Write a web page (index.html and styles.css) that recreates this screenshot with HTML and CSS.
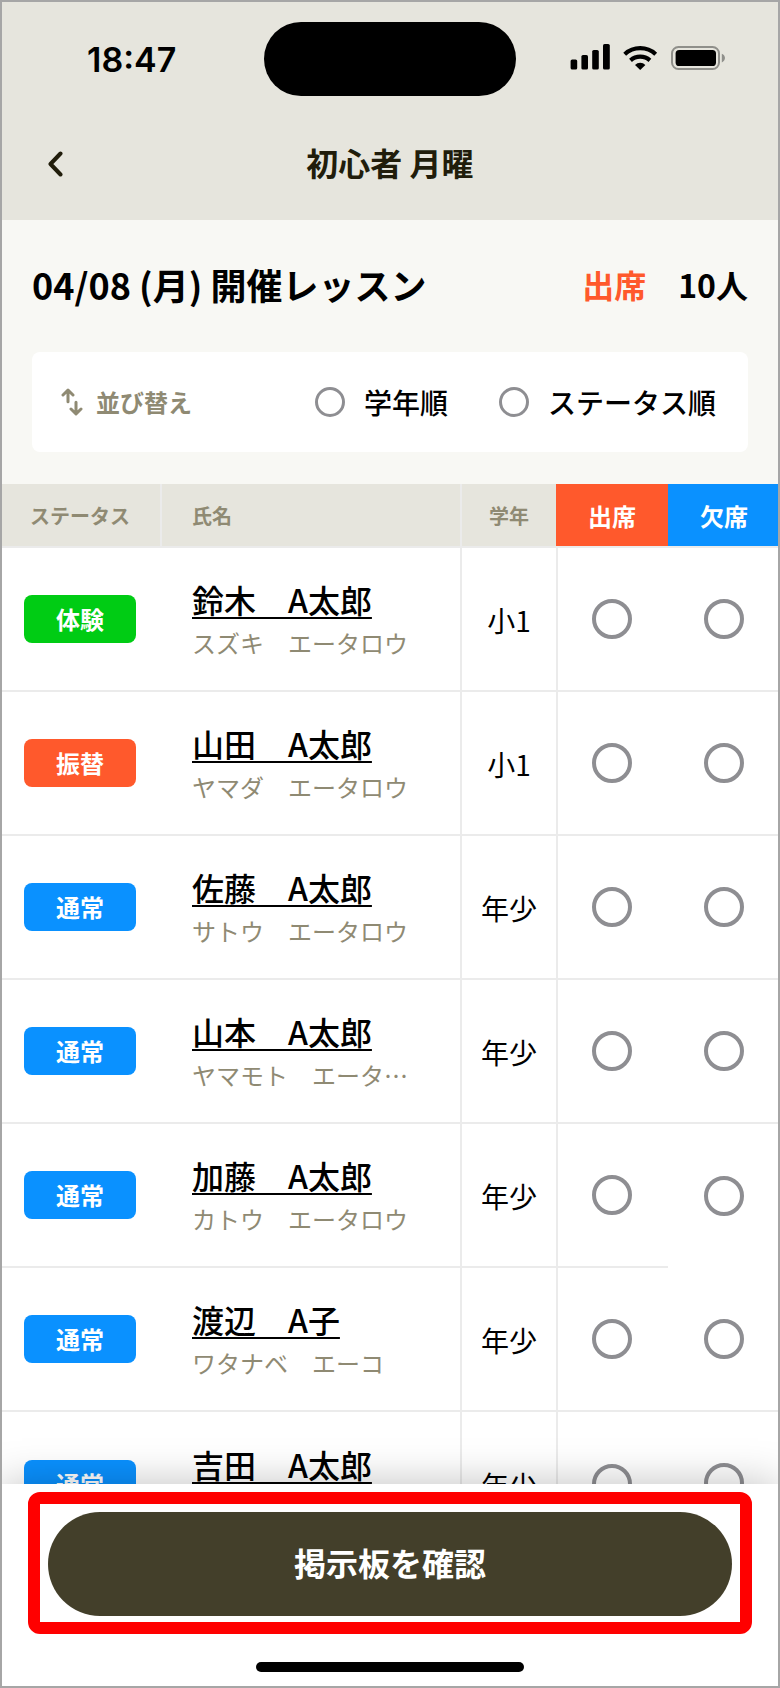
FILE: index.html
```
<!DOCTYPE html>
<html lang="ja">
<head>
    <meta charset="UTF-8">
    <meta name="viewport" content="width=device-width, initial-scale=1.0">
    <title>初心者 月曜</title>
    <link rel="stylesheet" href="styles.css">
</head>
<body>
<div class="screen">

    <!-- Header -->
    <header class="header">
        <div class="status-bar">
            <span class="time">18:47</span>
            <span class="island"></span>
            <svg class="status-icons" width="156" height="28" viewBox="0 0 156 28">
                <rect x="0.6" y="17.5" width="6.6" height="10" rx="1.6"/>
                <rect x="11.4" y="13" width="6.6" height="14.5" rx="1.6"/>
                <rect x="22.2" y="8" width="6.6" height="19.5" rx="1.6"/>
                <rect x="33" y="2" width="6.8" height="25.5" rx="1.6"/>
                <path d="M54.7 12.2a23 23 0 0 1 31 0M60.5 18.4a14.6 14.6 0 0 1 19.4 0" fill="none" stroke="#000" stroke-width="4.2"/>
                <path d="M70.2 28l-5.2-5.1a7.6 7.6 0 0 1 10.4 0z"/>
                <rect x="102" y="5" width="47" height="22" rx="6.5" fill="none" stroke="#8f8f8a" stroke-width="2"/>
                <rect x="105.6" y="8" width="40.4" height="16" rx="3.6"/>
                <path d="M151.8 11.8c4.2 1.6 4.2 7 0 8.6z" fill="#8f8f8a"/>
            </svg>
        </div>
        <div class="nav">
            <svg class="back" width="16" height="26" viewBox="0 0 16 26">
                <path d="M12.5 2.5L2.5 13l10 10.5" fill="none" stroke="#211d0b" stroke-width="4" stroke-linecap="round" stroke-linejoin="round"/>
            </svg>
            <h1>初心者 月曜</h1>
        </div>
    </header>

    <!-- Lesson summary and sort -->
    <section class="lesson">
        <div class="lesson-head">
            <h2>04/08 (月) 開催レッスン</h2>
            <p class="count"><span class="count-label">出席</span><span>10人</span></p>
        </div>
        <div class="sort">
            <svg width="22" height="28" viewBox="0 0 22 28" fill="none" stroke="#8f8a73" stroke-width="3" stroke-linecap="round" stroke-linejoin="round">
                <path d="M7 13.8V2.5M2 7l5-4.8L12 7"/>
                <path d="M15 14.2v11.3M10 21l5 4.8 5-4.8"/>
            </svg>
            <span class="sort-label">並び替え</span>
            <label class="sort-option"><span class="radio small"></span>学年順</label>
            <label class="sort-option"><span class="radio small"></span>ステータス順</label>
        </div>
    </section>

    <!-- Students -->
    <table class="students">
        <thead>
            <tr>
                <th class="col-status">ステータス</th>
                <th class="col-name">氏名</th>
                <th class="col-grade">学年</th>
                <th class="col-present">出席</th>
                <th class="col-absent">欠席</th>
            </tr>
        </thead>
        <tbody>
            <tr>
                <td><span class="badge trial">体験</span></td>
                <td class="name"><a>鈴木　A太郎</a><small>スズキ　エータロウ</small></td>
                <td class="grade">小1</td>
                <td class="present"><span class="radio"></span></td>
                <td class="absent"><span class="radio"></span></td>
            </tr>
            <tr>
                <td><span class="badge transfer">振替</span></td>
                <td class="name"><a>山田　A太郎</a><small>ヤマダ　エータロウ</small></td>
                <td class="grade">小1</td>
                <td class="present"><span class="radio"></span></td>
                <td class="absent"><span class="radio"></span></td>
            </tr>
            <tr>
                <td><span class="badge">通常</span></td>
                <td class="name"><a>佐藤　A太郎</a><small>サトウ　エータロウ</small></td>
                <td class="grade">年少</td>
                <td class="present"><span class="radio"></span></td>
                <td class="absent"><span class="radio"></span></td>
            </tr>
            <tr>
                <td><span class="badge">通常</span></td>
                <td class="name"><a>山本　A太郎</a><small>ヤマモト　エータ…</small></td>
                <td class="grade">年少</td>
                <td class="present"><span class="radio"></span></td>
                <td class="absent"><span class="radio"></span></td>
            </tr>
            <tr>
                <td><span class="badge">通常</span></td>
                <td class="name"><a>加藤　A太郎</a><small>カトウ　エータロウ</small></td>
                <td class="grade">年少</td>
                <td class="present"><span class="radio"></span></td>
                <td class="absent no-line"><span class="radio"></span></td>
            </tr>
            <tr>
                <td><span class="badge">通常</span></td>
                <td class="name"><a>渡辺　A子</a><small>ワタナベ　エーコ</small></td>
                <td class="grade">年少</td>
                <td class="present"><span class="radio"></span></td>
                <td class="absent"><span class="radio"></span></td>
            </tr>
            <tr>
                <td class="no-line"><span class="badge">通常</span></td>
                <td class="name no-line"><a>吉田　A太郎</a><small>ヨシダ　エータロウ</small></td>
                <td class="grade no-line">年少</td>
                <td class="present no-line"><span class="radio"></span></td>
                <td class="absent"><span class="radio"></span></td>
            </tr>
        </tbody>
    </table>

    <!-- Fixed footer over the list -->
    <footer class="footer">
        <div class="highlight">
            <button type="button">掲示板を確認</button>
        </div>
        <div class="home-bar"></div>
    </footer>
</div>
</body>
</html>
```
FILE: styles.css
```
* {
    box-sizing: border-box;
}
body {
    margin: 0;
    font-family: "Noto Sans CJK JP", sans-serif;
    color: #000;
}
h1, h2, p {
    margin: 0;
}
.screen {
    position: relative;
    width: 780px;
    height: 1688px;
    border: 2px solid #a6a6a6;
    background-color: #fff;
    overflow: hidden;
}

/* Header */
.header {
    height: 218px;
    background-color: #e6e5dd;
}
.status-bar {
    display: flex;
    height: 102px;
    padding-top: 20px;
}
.time {
    width: 262px;
    padding-left: 85px;
    font: 600 34px/75px Inter, sans-serif;
}
.island {
    width: 252px;
    height: 74px;
    border-radius: 37px;
    background-color: #000;
}
.status-icons {
    margin: 20px 0 0 54px;
}
.nav {
    display: grid;
    grid-template-columns: 46px 1fr 46px;
    align-items: center;
    height: 116px;
}
.back {
    margin: 4px 0 0 46px;
}
.nav h1 {
    color: #211d0b;
    font-size: 32px;
    line-height: 48px;
    text-align: center;
}

/* Lesson */
.lesson {
    height: 264px;
    padding: 0 30px;
    background-color: #f8f8f4;
}
.lesson-head {
    display: flex;
    justify-content: space-between;
    align-items: center;
    height: 128px;
    margin-bottom: 4px;
}
.lesson-head h2 {
    font-size: 36px;
    line-height: 54px;
}
.count {
    display: flex;
    gap: 32px;
    font-size: 32px;
    font-weight: bold;
    line-height: 48px;
}
.count-label {
    color: #ff592c;
}
.sort {
    display: flex;
    align-items: center;
    height: 100px;
    padding: 0 32px 0 29px;
    border-radius: 8px;
    background-color: #fff;
}
.sort-label {
    margin: 0 auto 0 13px;
    padding-bottom: 2px;
    color: #8f8a73;
    font-size: 24px;
    font-weight: bold;
}
.sort-option {
    display: flex;
    align-items: center;
    gap: 19px;
    font-size: 28px;
    font-weight: 500;
}
.sort-option + .sort-option {
    margin-left: 51px;
}
.radio {
    display: block;
    width: 40px;
    height: 40px;
    border: 4px solid #8e8e92;
    border-radius: 50%;
}
.radio.small {
    width: 30px;
    height: 30px;
    border-width: 3px;
}

/* Students */
.students {
    width: 776px;
    table-layout: fixed;
    border-collapse: separate;
    border-spacing: 0;
}
.students th,
.students td {
    padding: 0;
    border-bottom: 2px solid #ebebeb;
    vertical-align: middle;
}
.students th {
    height: 64px;
    background-color: #e6e5dd;
    background-clip: padding-box;
    color: #8f8a73;
    font-size: 20px;
}
.students td {
    height: 144px;
}
.students .col-status {
    width: 160px;
    padding-right: 2px;
    border-right: 2px solid #ebebeb;
}
.students .col-name {
    width: 300px;
    padding-left: 30px;
    border-right: 2px solid #ebebeb;
    text-align: left;
}
.students .col-grade {
    width: 94px;
}
.students .col-present,
.students .col-absent {
    width: 112px;
    background-color: #ff592c;
    color: #fff;
    font-size: 24px;
}
.students .col-absent {
    width: 110px;
    padding-left: 2px;
    background-color: #0a91ff;
}
.badge {
    display: block;
    width: 112px;
    height: 48px;
    margin-left: 22px;
    border-radius: 8px;
    background-color: #0a91ff;
    color: #fff;
    font-size: 24px;
    font-weight: bold;
    line-height: 47px;
    text-align: center;
}
.badge.trial {
    background-color: #00cc14;
}
.badge.transfer {
    background-color: #ff592c;
}
.students .name {
    padding-left: 30px;
    border-right: 2px solid #ebebeb;
}
.name a {
    display: block;
    font-size: 32px;
    font-weight: 500;
    line-height: 44px;
    text-decoration: underline;
    text-decoration-thickness: 1.5px;
    text-decoration-skip-ink: none;
    text-underline-offset: 4px;
}
.name small {
    display: block;
    height: 40px;
    color: #8f8a73;
    font-size: 24px;
    line-height: 43px;
}
.students .grade {
    padding-top: 2px;
    font-size: 28px;
    text-align: center;
}
.present {
    border-left: 2px solid #ebebeb;
}
.present .radio {
    margin-left: 34px;
}
.absent .radio {
    margin-left: 36px;
}
.students .no-line {
    border-bottom: 0;
}

/* Footer */
.footer {
    position: absolute;
    left: 0;
    right: 0;
    bottom: 0;
    height: 202px;
    padding: 8px 26px 0;
    background-color: #fff;
    box-shadow: 0 0 40px rgba(0, 0, 0, 0.25);
}
.highlight {
    height: 142px;
    padding: 8px 8px 6px;
    border: 12px solid #ff0000;
    border-radius: 12px;
}
.highlight button {
    display: block;
    width: 100%;
    height: 104px;
    padding: 0 0 4px;
    border: 0;
    border-radius: 52px;
    background-color: #433f2a;
    color: #fff;
    font-family: inherit;
    font-size: 32px;
    font-weight: bold;
}
.home-bar {
    width: 268px;
    height: 10px;
    margin: 28px auto 0;
    border-radius: 5px;
    background-color: #000;
}
```
